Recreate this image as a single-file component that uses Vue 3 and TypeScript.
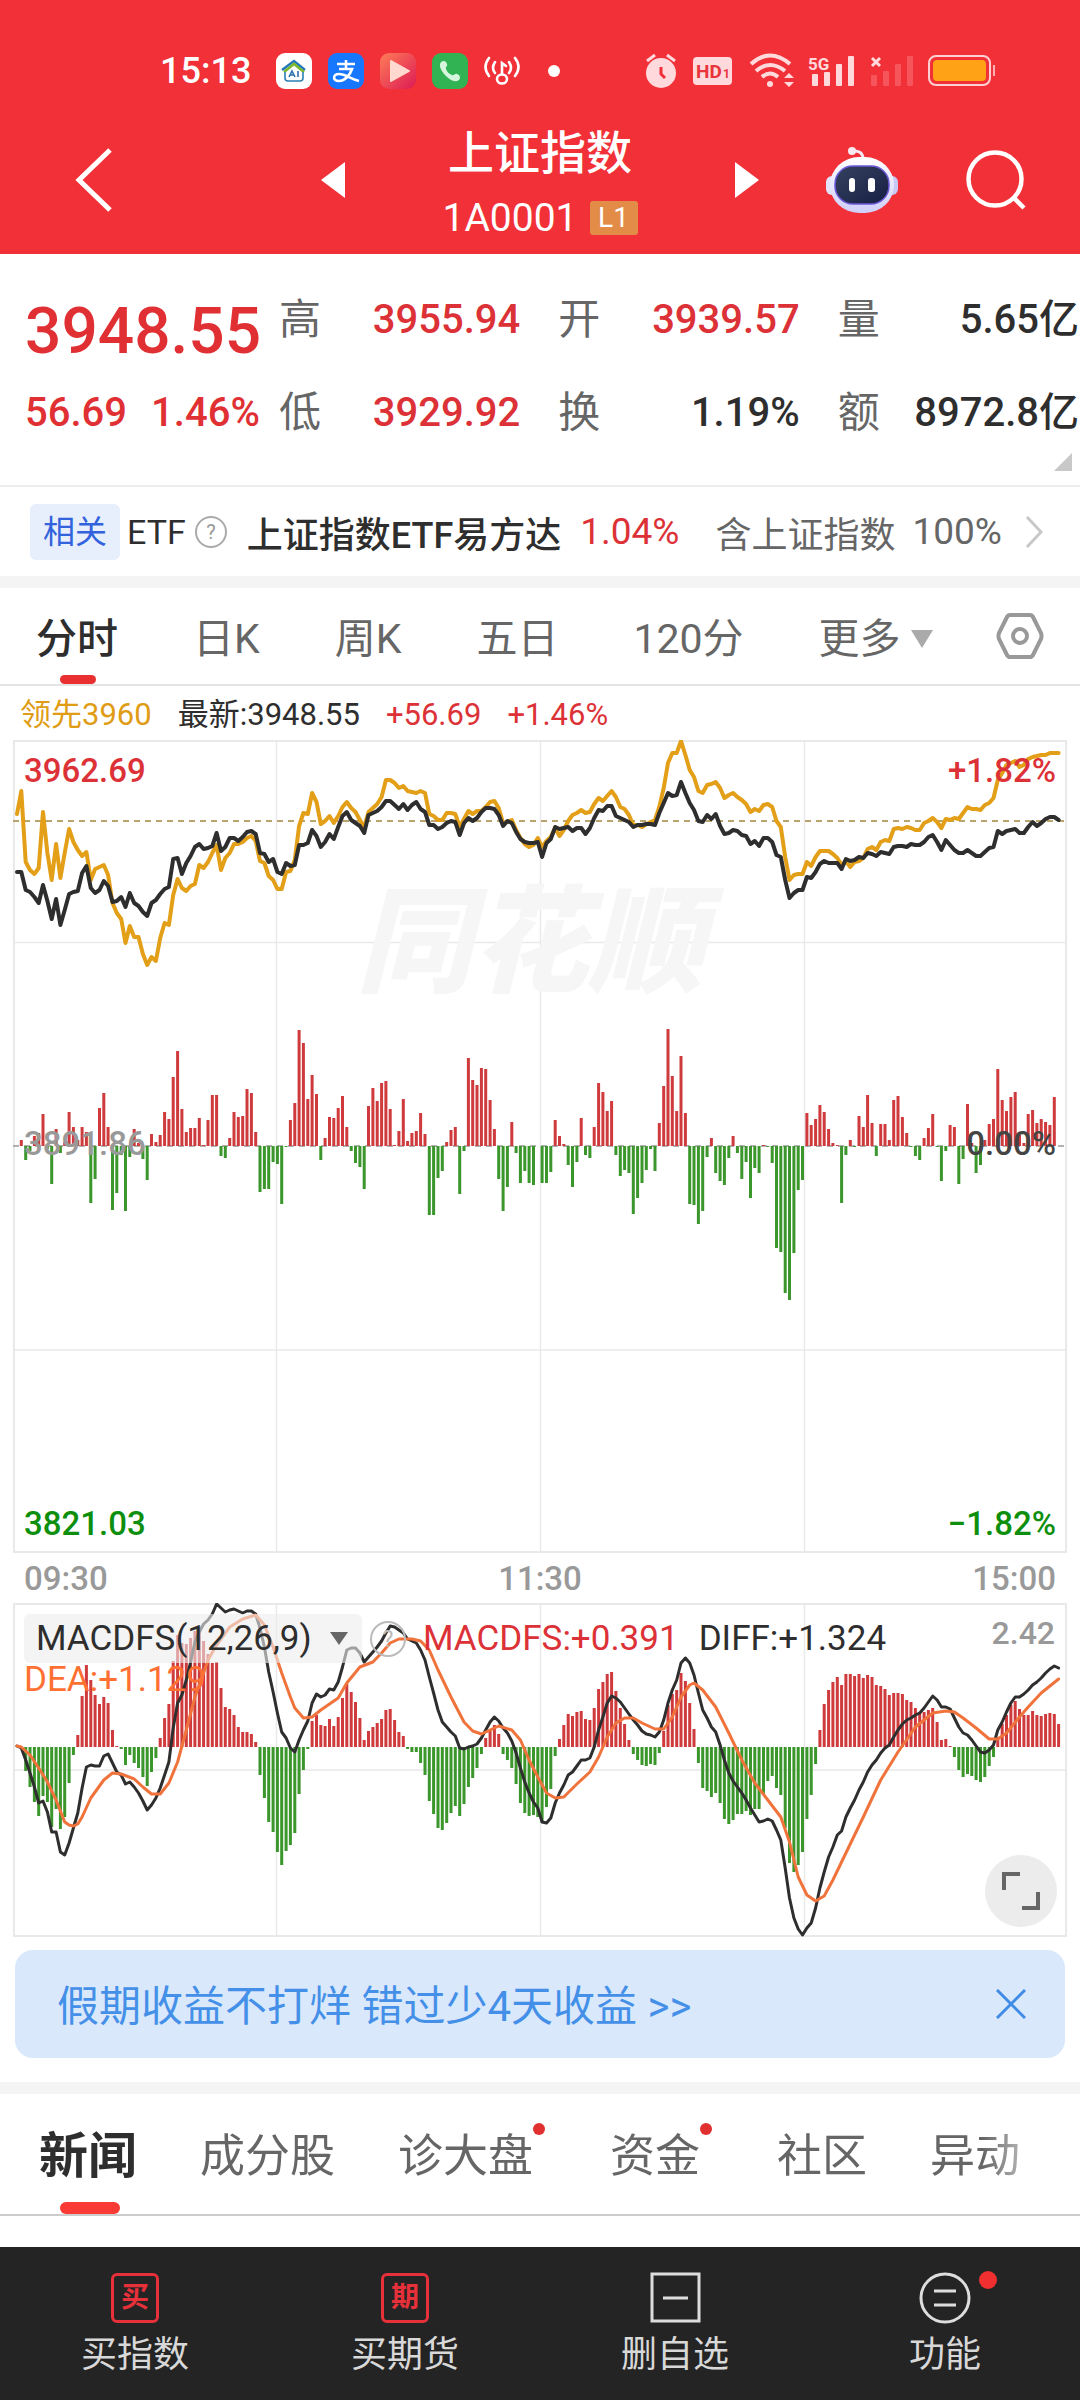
<script setup lang="ts">
interface Quote { label: string; value: string; up: boolean }
interface NewsTab { name: string; dot?: boolean; active?: boolean }

const quoteColumns: Quote[][] = [
  [{ label: '高', value: '3955.94', up: true }, { label: '低', value: '3929.92', up: true }],
  [{ label: '开', value: '3939.57', up: true }, { label: '换', value: '1.19%', up: false }],
  [{ label: '量', value: '5.65亿', up: false }, { label: '额', value: '8972.8亿', up: false }],
]

const periods: string[] = ['分时', '日K', '周K', '五日', '120分']

const newsTabs: NewsTab[] = [
  { name: '新闻', active: true },
  { name: '成分股' },
  { name: '诊大盘', dot: true },
  { name: '资金', dot: true },
  { name: '社区' },
  { name: '异动' },
]

// One sample per trading minute, 09:30 to 15:00
const STEP = 4.34
const px = (i: number): number => Math.round((4 + i * STEP) * 10) / 10

// Index price, measured down from the top of the frame
const price: number[] = [
  132, 132, 150, 152, 157, 163, 145, 161, 179, 159, 185, 170, 154, 152, 151, 133, 126, 148, 153, 150,
  141, 146, 162, 161, 157, 167, 153, 163, 166, 172, 176, 163, 160, 154, 149, 147, 119, 118, 134, 123,
  116, 107, 104, 109, 108, 106, 93, 111, 107, 98, 98, 101, 97, 92, 91, 94, 113, 114, 122, 119,
  132, 134, 123, 126, 125, 105, 105, 103, 90, 96, 107, 102, 94, 99, 87, 76, 72, 80, 83, 86,
  93, 75, 73, 71, 67, 61, 61, 65, 69, 64, 70, 65, 62, 69, 72, 85, 85, 89, 87, 83,
  81, 82, 95, 83, 78, 81, 78, 72, 68, 68, 69, 75, 86, 81, 83, 92, 99, 102, 103, 103,
  102, 117, 103, 99, 87, 89, 88, 87, 91, 88, 88, 94, 88, 78, 70, 71, 66, 66, 76, 78,
  80, 82, 87, 85, 85, 84, 84, 85, 73, 63, 53, 56, 55, 42, 53, 63, 70, 81, 82, 75,
  79, 74, 86, 94, 93, 90, 91, 95, 96, 104, 101, 106, 98, 98, 102, 115, 117, 140, 158, 153,
  150, 150, 137, 138, 132, 124, 121, 123, 123, 123, 129, 119, 121, 120, 117, 118, 113, 114, 116, 112,
  113, 114, 107, 106, 106, 107, 104, 105, 105, 102, 97, 95, 102, 110, 100, 105, 110, 113, 113, 110,
  113, 116, 116, 112, 108, 107, 91, 94, 91, 90, 89, 93, 93, 87, 82, 86, 83, 79, 77, 77, 80,
]

// Leading indicator
const leading: number[] = [
  74, 51, 122, 130, 134, 128, 72, 113, 140, 104, 138, 113, 89, 102, 110, 116, 112, 140, 129, 127,
  125, 135, 163, 173, 179, 203, 186, 197, 197, 214, 225, 217, 221, 198, 183, 185, 155, 139, 148, 151,
  146, 144, 125, 128, 122, 113, 105, 130, 118, 113, 104, 104, 102, 98, 96, 101, 121, 123, 136, 140,
  149, 149, 132, 131, 120, 86, 73, 74, 53, 62, 84, 81, 76, 83, 76, 67, 62, 68, 72, 80,
  87, 72, 68, 64, 57, 40, 40, 43, 48, 46, 51, 52, 53, 51, 53, 74, 76, 80, 80, 73,
  73, 74, 87, 79, 71, 74, 71, 71, 67, 62, 61, 68, 83, 82, 80, 90, 98, 104, 107, 105,
  98, 107, 101, 97, 88, 96, 90, 81, 75, 73, 70, 73, 72, 64, 58, 61, 56, 51, 57, 67,
  69, 75, 85, 85, 87, 84, 82, 80, 67, 48, 23, 13, 13, 1, 15, 30, 37, 51, 53, 45,
  44, 42, 48, 58, 55, 53, 57, 60, 64, 72, 69, 71, 65, 64, 67, 81, 87, 117, 140, 135,
  134, 134, 122, 126, 117, 111, 111, 111, 114, 118, 125, 121, 127, 122, 121, 118, 109, 107, 110, 102,
  100, 101, 89, 88, 89, 87, 88, 90, 90, 83, 81, 78, 82, 88, 79, 80, 78, 79, 73, 67,
  69, 69, 70, 65, 63, 58, 40, 33, 25, 23, 21, 27, 25, 19, 17, 16, 15, 15, 13, 13, 13,
]

// Buying (positive) and selling (negative) pressure
const pressure: number[] = [
  0, 6, -14, -5, 10, 13, 32, -3, -38, 17, -7, 4, 34, 19, 6, 19, 14, -57, -33, 38,
  53, 19, -64, -47, -9, -65, -11, 17, 3, -13, -34, 12, 4, 11, 34, 27, 69, 95, 37, 14,
  18, 18, 28, 1, 26, 51, 51, -10, -12, 8, 34, 29, 30, 57, 53, 14, -46, -43, -43, -16,
  -18, -58, -1, 26, 43, 116, 103, 47, 71, 52, -14, 8, 29, 28, 38, 50, 19, -5, -17, -21,
  -43, 40, 58, 45, 63, 65, 37, 1, 15, 47, 5, 13, 15, 33, 12, -69, -69, -32, -25, 4,
  16, 19, -48, -5, 88, 66, 61, 78, 77, 46, 17, -33, -65, -41, 24, -7, -37, -25, -37, -39,
  0, -37, -37, -26, 26, 10, 2, -19, -41, -16, 28, -9, -12, 19, 63, 54, 35, 45, -9, -30,
  -24, -27, -68, -52, -37, -24, -3, -25, 23, 60, 117, 70, 35, 90, 33, -58, -59, -78, -65, -11,
  8, -27, -35, -39, -12, 10, -7, -33, -16, -52, -22, -27, 1, -1, -17, -102, -106, -147, -154, -107,
  -44, -34, 33, 21, 27, 41, 34, 17, 3, 1, -57, -9, 6, -1, 30, 19, 51, 23, -10, 22,
  22, 6, 46, 50, 29, 13, -1, -10, -14, 8, 18, 32, -1, -35, -5, 21, 19, -38, -13, 42,
  3, -27, -19, 6, 22, 27, 77, 46, 35, 49, 54, 11, 3, 32, 36, 23, 27, 24, 21, 49, 0,
]

const macd: number[] = [
  0, -2, -24, -40, -55, -69, -49, -55, -80, -62, -82, -70, -36, -8, 12, 51, 82, 67, 52, 43,
  50, 44, 17, 1, -2, -18, -8, -16, -21, -30, -39, -25, -11, 9, 29, 43, 86, 112, 104, 103,
  109, 116, 120, 106, 93, 84, 85, 59, 40, 38, 32, 20, 15, 15, 13, 5, -28, -51, -75, -85,
  -105, -118, -104, -98, -86, -47, -23, -2, 26, 32, 22, 21, 28, 21, 30, 49, 63, 55, 45, 29,
  7, 16, 20, 24, 28, 37, 38, 27, 15, 11, -2, -5, -5, -16, -28, -54, -67, -81, -83, -76,
  -66, -59, -69, -57, -40, -31, -21, -7, 9, 17, 22, 13, -7, -13, -21, -37, -56, -66, -69, -68,
  -70, -76, -60, -42, -9, 8, 22, 33, 31, 35, 36, 28, 27, 39, 58, 65, 73, 75, 56, 39,
  23, 7, -7, -13, -18, -19, -17, -18, -6, 16, 42, 53, 57, 74, 66, 44, 18, -16, -41, -44,
  -50, -46, -56, -72, -77, -73, -67, -67, -64, -68, -62, -62, -48, -34, -29, -41, -48, -81, -116, -125,
  -118, -105, -72, -48, -17, 17, 43, 57, 65, 70, 62, 73, 73, 71, 73, 69, 72, 70, 62, 61,
  58, 52, 54, 54, 53, 47, 45, 39, 35, 35, 37, 39, 25, 7, 8, 1, -10, -23, -30, -27,
  -29, -33, -35, -30, -19, -10, 10, 23, 32, 42, 46, 38, 32, 32, 36, 32, 31, 33, 34, 33, 23,
]

const diff: number[] = [
  143, 145, 157, 170, 184, 200, 198, 209, 229, 229, 249, 252, 240, 225, 210, 185, 164, 162, 163, 163,
  153, 151, 160, 169, 172, 181, 179, 184, 190, 198, 207, 202, 195, 185, 172, 159, 125, 100, 92, 77,
  59, 39, 29, 21, 17, 11, 1, 5, 9, 7, 6, 8, 10, 8, 8, 11, 25, 44, 69, 89,
  110, 129, 135, 145, 149, 137, 127, 118, 100, 91, 94, 92, 86, 87, 79, 64, 47, 45, 45, 50,
  59, 54, 49, 44, 38, 30, 23, 24, 27, 30, 36, 38, 40, 47, 57, 74, 90, 107, 119, 124,
  129, 133, 145, 146, 144, 143, 141, 135, 127, 119, 114, 118, 125, 130, 138, 150, 165, 179, 190, 199,
  205, 219, 220, 215, 200, 190, 182, 172, 169, 163, 157, 157, 155, 144, 127, 114, 100, 93, 95, 99,
  105, 111, 117, 122, 128, 131, 132, 134, 129, 117, 100, 87, 77, 60, 55, 60, 72, 90, 107, 115,
  124, 129, 142, 157, 170, 178, 184, 190, 197, 205, 212, 219, 218, 216, 218, 227, 237, 265, 295, 315,
  326, 332, 325, 320, 305, 285, 269, 254, 244, 232, 228, 214, 205, 197, 187, 179, 169, 162, 157, 150,
  145, 142, 134, 127, 121, 117, 115, 112, 110, 105, 99, 93, 97, 104, 104, 106, 115, 124, 130, 132,
  137, 143, 149, 150, 147, 142, 127, 119, 109, 100, 94, 94, 91, 87, 82, 79, 75, 70, 66, 63, 65,
]

// DEA is already smoothed, so only its knots are kept: [minute, y]
const dea: [number, number][] = [
  [0, 143], [1, 144], [3, 152], [5, 165], [7, 179], [9, 197], [11, 219], [12, 222], [13, 223], [14, 221],
  [15, 214], [17, 195], [20, 177], [22, 170], [24, 171], [27, 176], [29, 184], [31, 191], [33, 191], [35, 180],
  [37, 159], [39, 127], [41, 94], [43, 70], [44, 57], [46, 42], [49, 24], [52, 16], [55, 12], [57, 22],
  [59, 44], [61, 70], [63, 94], [64, 105], [66, 115], [68, 114], [70, 107], [74, 95], [76, 80], [79, 64],
  [82, 59], [84, 50], [86, 40], [88, 36], [91, 36], [93, 38], [95, 47], [97, 67], [100, 94], [103, 119],
  [105, 128], [107, 131], [109, 127], [111, 123], [114, 127], [116, 137], [118, 157], [120, 174], [122, 190],
  [124, 195], [126, 194], [129, 181], [132, 169], [134, 154], [136, 134], [138, 120], [140, 115], [142, 115],
  [144, 120], [147, 126], [149, 126], [151, 114], [153, 94], [155, 82], [156, 80], [158, 87], [161, 104],
  [164, 130], [167, 157], [170, 180], [173, 197], [176, 214], [178, 239], [180, 274], [182, 292], [184, 298],
  [186, 293], [188, 277], [191, 250], [195, 214], [199, 177], [203, 149], [207, 124], [211, 110], [214, 108],
  [216, 109], [218, 115], [221, 125], [224, 136], [226, 136], [228, 130], [231, 114], [233, 104], [236, 90],
  [238, 83], [240, 76],
]

const polyline = (ys: number[]): string => ys.map((y, i) => `${px(i)},${y}`).join(' ')
const bars = (values: number[], base: number, up: boolean): string =>
  values
    .map((v, i) => ((up ? v > 0 : v < 0) ? `M${px(i)} ${base}V${base - v}` : ''))
    .join('')

const pricePoints = polyline(price)
const leadingPoints = polyline(leading)
const diffPoints = polyline(diff)
const deaPoints = dea.map(([i, y]) => `${px(i)},${y}`).join(' ')
</script>

<template>
  <div class="app">
    <header class="top">
      <div class="status">
        <div class="status-left">
          <span class="clock">15:13</span>
          <svg width="36" height="36" viewBox="0 0 36 36" aria-hidden="true">
            <rect width="36" height="36" rx="9" fill="#fff" />
            <path d="M6 17 18 8l11 9" fill="none" stroke="#2376b9" stroke-width="2.4" />
            <path d="M8 19 18 11l10 8" fill="none" stroke="#7cb82f" stroke-width="2.6" />
            <path d="M9 19v6q0 3 3 3h12q3 0 3-3v-6" fill="none" stroke="#2b7fb4" stroke-width="1.6" />
            <path d="m13 24 3-6 3 6m-5-2h4m4-4v6" fill="none" stroke="#2d6fae" stroke-width="1.6" />
          </svg>
          <svg width="36" height="36" viewBox="0 0 36 36" aria-hidden="true">
            <rect width="36" height="36" rx="9" fill="#1777ff" />
            <path d="M18 7v9M9 11h18M11 16h13c-2 6-7 12-13 12-7 0-6-7 0-7 7 0 11 5 20 7" fill="none" stroke="#fff" stroke-width="2.6" />
          </svg>
          <svg width="36" height="36" viewBox="0 0 36 36" aria-hidden="true">
            <defs>
              <linearGradient id="video" x1="0" y1="0" x2="1" y2="1">
                <stop offset="0" stop-color="#ff7d57" />
                <stop offset="1" stop-color="#dc1a55" />
              </linearGradient>
            </defs>
            <rect width="36" height="36" rx="9" fill="url(#video)" />
            <path d="M11 8v20l18-10z" fill="#ffd9cf" stroke="#ffd9cf" stroke-width="2" stroke-linejoin="round" />
          </svg>
          <svg width="36" height="36" viewBox="0 0 36 36" aria-hidden="true">
            <rect width="36" height="36" rx="9" fill="#31b353" />
            <path d="M9 9c3-2 5-1 6 2 1 2-2 3-1 5 1 3 3 5 6 6 2 1 3-2 5-1 3 1 4 4 2 6-4 3-9 0-13-4C10 19 6 13 9 9z" fill="#d5f5dc" />
          </svg>
          <svg width="36" height="36" viewBox="0 0 36 36" fill="none" stroke="#fff" stroke-width="2.6" stroke-linecap="round" aria-hidden="true">
            <path d="M18 21V10l4 3" />
            <ellipse cx="18" cy="26" rx="5" ry="4.5" />
            <path d="M11 9q-4 6 0 11M25 9q4 6 0 11M5 5q-7 9 0 18M31 5q7 9 0 18" />
          </svg>
          <i class="more-dot"></i>
        </div>
        <div class="status-right">
          <svg width="32" height="36" viewBox="0 0 32 36" aria-hidden="true">
            <circle cx="16" cy="20" r="15" fill="#ffd9dc" />
            <path d="M2 8l8-6M30 8l-8-6" stroke="#ffd9dc" stroke-width="3" />
            <path d="M16 14v7l4 4" fill="none" stroke="#f03038" stroke-width="3" />
          </svg>
          <svg width="44" height="36" viewBox="0 0 44 36" aria-hidden="true">
            <rect x="2" y="4" width="39" height="28" rx="4" fill="#ffd9dc" />
            <text x="5" y="25" font-size="19" font-weight="700" fill="#e8343c">HD</text>
            <text x="32" y="25" font-size="12" font-weight="700" fill="#e8343c">1</text>
          </svg>
          <svg width="45" height="36" viewBox="0 0 45 36" fill="none" stroke="#ffd9dc" stroke-width="4" aria-hidden="true">
            <path d="M2 11q19-17 39 0M7 18q14-12 29 0M13 24q8-7 16 0" />
            <circle cx="21" cy="31" r="3" fill="#ffd9dc" stroke="none" />
            <path d="M35 25l5-5 5 5zM35 29l5 5 5-5z" fill="#ffd9dc" stroke="none" />
          </svg>
          <svg width="48" height="36" viewBox="0 0 48 36" fill="#ffd9dc" aria-hidden="true">
            <text x="0" y="17" font-size="17" font-weight="700">5G</text>
            <rect x="4" y="21" width="6" height="12" rx="1" />
            <rect x="16" y="19" width="6" height="14" rx="1" />
            <rect x="28" y="11" width="6" height="22" rx="1" />
            <rect x="40" y="3" width="6" height="30" rx="1" />
          </svg>
          <svg width="44" height="36" viewBox="0 0 44 36" fill="#f7555c" aria-hidden="true">
            <path d="M2 5l8 8M10 5l-8 8" stroke="#ffd9dc" stroke-width="3" />
            <rect x="1" y="22" width="6" height="11" rx="1" />
            <rect x="13" y="18" width="6" height="15" rx="1" />
            <rect x="25" y="11" width="6" height="22" rx="1" />
            <rect x="37" y="3" width="6" height="30" rx="1" />
          </svg>
          <svg width="68" height="36" viewBox="0 0 68 36" aria-hidden="true">
            <rect x="1" y="3" width="61" height="29" rx="7" fill="none" stroke="#ffd0d3" stroke-width="2" />
            <rect x="5" y="7" width="53" height="21" rx="4" fill="#ffa216" />
            <rect x="65" y="12" width="2" height="11" fill="#ffb0b4" />
          </svg>
        </div>
      </div>

      <div class="titlebar">
        <button class="icon-btn back" type="button" aria-label="返回">
          <svg width="38" height="66" viewBox="0 0 38 66"><path d="M35 3 4 33l31 30" fill="none" stroke="#fff" stroke-width="5" /></svg>
        </button>
        <div class="switcher">
          <button class="icon-btn" type="button" aria-label="上一个">
            <svg width="24" height="36" viewBox="0 0 24 36"><path d="M24 0v36L0 18z" fill="#fff" /></svg>
          </button>
          <div class="title">
            <h1>上证指数</h1>
            <p>1A0001<span class="level">L1</span></p>
          </div>
          <button class="icon-btn" type="button" aria-label="下一个">
            <svg width="24" height="36" viewBox="0 0 24 36"><path d="M0 0v36l24-18z" fill="#fff" /></svg>
          </button>
        </div>
        <div class="actions">
          <button class="icon-btn" type="button" aria-label="智能助手">
            <svg width="72" height="68" viewBox="0 0 72 68">
              <defs>
                <linearGradient id="shell" x1="0" y1="0" x2="0" y2="1">
                  <stop offset="0" stop-color="#fff" />
                  <stop offset="1" stop-color="#cfcffa" />
                </linearGradient>
                <linearGradient id="visor" x1="0" y1="0" x2="1" y2="1">
                  <stop offset="0" stop-color="#35405f" />
                  <stop offset="1" stop-color="#172044" />
                </linearGradient>
              </defs>
              <path d="M26 5q11-1 11 8" fill="none" stroke="#f3e7f2" stroke-width="3" />
              <circle cx="26" cy="5" r="4" fill="#f7e9f0" />
              <rect x="0" y="30" width="12" height="19" rx="6" fill="#e3e2fb" />
              <rect x="60" y="30" width="12" height="19" rx="6" fill="#c9c9f8" />
              <rect x="4" y="11" width="64" height="56" rx="29" fill="url(#shell)" />
              <rect x="9" y="20" width="54" height="38" rx="18" fill="url(#visor)" stroke="#6b58d8" stroke-width="1.5" />
              <rect x="23" y="32" width="6" height="14" rx="3" fill="#fff" />
              <rect x="42" y="32" width="7" height="14" rx="3" fill="#fff" />
            </svg>
          </button>
          <button class="icon-btn" type="button" aria-label="搜索">
            <svg width="60" height="60" viewBox="0 0 60 60" fill="none" stroke="#fff" stroke-width="4.500">
              <circle cx="29" cy="29" r="26.500" /><path d="m47 47 11 11" />
            </svg>
          </button>
        </div>
      </div>
    </header>

    <section class="quote">
      <div class="latest">
        <strong>3948.55</strong>
        <p><span>56.69</span><span>1.46%</span></p>
      </div>
      <div class="stats">
        <dl v-for="(column, c) in quoteColumns" :key="c">
          <div v-for="item in column" :key="item.label">
            <dt>{{ item.label }}</dt>
            <dd :class="{ up: item.up }">{{ item.value }}</dd>
          </div>
        </dl>
      </div>
      <i class="corner"></i>
    </section>

    <a class="etf" href="#etf">
      <span class="related">相关</span>
      <span class="etf-word">ETF</span>
      <svg class="help" width="32" height="32" viewBox="0 0 32 32">
        <circle cx="16" cy="16" r="15" fill="none" stroke="#aaa" stroke-width="2" />
        <text x="16" y="23" text-anchor="middle" font-size="20" fill="#999">?</text>
      </svg>
      <b>上证指数ETF易方达</b>
      <span class="up rate">1.04%</span>
      <span class="weight">含上证指数</span>
      <span class="gray">100%</span>
      <svg class="arrow" width="18" height="32" viewBox="0 0 18 32"><path d="m2 1 14 15L2 31" fill="none" stroke="#c8c8c8" stroke-width="3" /></svg>
    </a>

    <nav class="periods">
      <div class="period-tabs">
        <button v-for="(p, i) in periods" :key="p" type="button" :class="{ active: i === 0 }">{{ p }}</button>
        <button type="button" class="more">更多<svg width="22" height="18" viewBox="0 0 22 18"><path d="M0 0h22L11 18z" fill="#aaa" /></svg></button>
      </div>
      <button type="button" aria-label="设置">
        <svg width="48" height="46" viewBox="0 0 48 46" fill="none" stroke="#999" stroke-width="4">
          <path d="M14 2h20q2 0 3 2l8 16q1 3 0 6l-8 16q-1 2-3 2H14q-2 0-3-2L3 26q-1-3 0-6l8-16q1-2 3-2z" />
          <circle cx="24" cy="23" r="7" />
        </svg>
      </button>
    </nav>

    <p class="legend">
      <span class="lead">领先3960</span><span>最新:3948.55</span><span class="up">+56.69</span><span class="up">+1.46%</span>
    </p>

    <div class="chart">
      <svg viewBox="0 0 1054 813">
        <g fill="none" stroke="#e9e9e9" stroke-width="2">
          <path d="M1 1h1052v811H1z" />
          <path d="M263.500 0v813M527.500 0v813M791.500 0v813M0 202.500h1054M0 610h1054" stroke-width="1.500" />
        </g>
        <text x="343" y="243" class="watermark">同花顺</text>
        <path d="M0 81h1054" stroke="#b8a46c" stroke-width="2" stroke-dasharray="6 5" />
        <path d="M0 406h1054" stroke="#999" stroke-width="1.500" stroke-dasharray="6 5" />
        <path :d="bars(pressure, 406, true)" stroke="#cf3b3d" stroke-width="3" />
        <path :d="bars(pressure, 406, false)" stroke="#3b962c" stroke-width="3" />
        <polyline :points="leadingPoints" class="line" stroke="#e29f17" />
        <polyline :points="pricePoints" class="line" stroke="#2e2e2e" />
      </svg>
      <div class="axis">
        <p class="up"><span>3962.69</span><span>+1.82%</span></p>
        <p class="mid"><span>3891.86</span><span class="zero">0.00%</span></p>
        <p class="down"><span>3821.03</span><span>−1.82%</span></p>
      </div>
    </div>
    <p class="times"><span>09:30</span><span>11:30</span><span>15:00</span></p>

    <div class="chart">
      <svg viewBox="0 0 1054 334">
        <g fill="none" stroke="#e9e9e9" stroke-width="2">
          <path d="M1 1h1052v332H1z" />
          <path d="M263.500 0v334M527.500 0v334M791.500 0v334M0 167h1054" stroke-width="1.500" />
        </g>
        <path :d="bars(macd, 144, true)" stroke="#cf3b3d" stroke-width="3" />
        <path :d="bars(macd, 144, false)" stroke="#3b962c" stroke-width="3" />
        <polyline :points="diffPoints" class="line thin" stroke="#2e2e2e" />
        <polyline :points="deaPoints" class="line thin" stroke="#f0733c" />
      </svg>
      <div class="macd-legend">
        <button type="button" class="indicator">MACDFS(12,26,9)<svg width="18" height="13" viewBox="0 0 18 13"><path d="M0 0h18L9 13z" fill="#666" /></svg></button>
        <svg class="help" width="38" height="38" viewBox="0 0 38 38">
          <circle cx="19" cy="19" r="17" fill="none" stroke="#bbb" stroke-width="2" />
          <text x="19" y="27" text-anchor="middle" font-size="23" fill="#bbb">?</text>
        </svg>
        <span class="up macd-value">MACDFS:+0.391</span>
        <span>DIFF:+1.324</span>
        <span class="dea">DEA:+1.129</span>
      </div>
      <span class="scale">2.42</span>
      <button type="button" class="expand" aria-label="全屏">
        <svg width="38" height="38" viewBox="0 0 38 38" fill="none" stroke="#666" stroke-width="4">
          <path d="M2 18V2h16M36 20v16H20" />
        </svg>
      </button>
    </div>

    <aside class="promo">
      <a href="#promo">假期收益不打烊 错过少4天收益 &gt;&gt;</a>
      <button type="button" class="icon-btn" aria-label="关闭">
        <svg width="30" height="30" viewBox="0 0 30 30"><path d="m1 1 28 28M29 1 1 29" stroke="#3f8be6" stroke-width="3" /></svg>
      </button>
    </aside>

    <nav class="news">
      <div class="news-tabs">
        <button v-for="t in newsTabs" :key="t.name" type="button" :class="{ active: t.active, dotted: t.dot }">{{ t.name }}</button>
      </div>
    </nav>

    <footer class="bottom">
      <button type="button"><span class="box">买</span>买指数</button>
      <button type="button"><span class="box">期</span>买期货</button>
      <button type="button">
        <svg width="52" height="52" viewBox="0 0 52 52" fill="none" stroke="#ddd" stroke-width="3"><path d="M3 2h47v47H3zM14 26h25" /></svg>删自选
      </button>
      <button type="button">
        <span class="func">
          <svg width="52" height="52" viewBox="0 0 52 52" fill="none" stroke="#ddd" stroke-width="3"><circle cx="26" cy="26" r="24" /><path d="M15 19h22M15 33h22" /></svg>
        </span>功能
      </button>
    </footer>
  </div>
</template>

<style>
body {
  margin: 0;
  background: #fff;
}
</style>

<style scoped>
.app {
  font-family: Roboto, "Noto Sans CJK SC", sans-serif;
  color: #2e2e2e;
  overflow: hidden;
}
p, h1, dl, dd {
  margin: 0;
}
button {
  padding: 0;
  border: 0;
  background: none;
  color: inherit;
  font: inherit;
}
svg {
  display: block;
  flex: none;
}
a {
  color: inherit;
  text-decoration: none;
}
.up {
  color: #dc3237;
}

.top {
  background: #f23038;
  color: #fff;
}
.status {
  display: flex;
  justify-content: space-between;
  height: 70px;
  padding: 36px 84px 0 160px;
}
.status-left, .status-right {
  display: flex;
  align-items: center;
}
.status-left {
  gap: 16px;
}
.status-right {
  gap: 14px;
}
.clock {
  width: 100px;
  font-size: 36px;
  font-weight: 500;
}
.more-dot {
  width: 12px;
  height: 12px;
  margin-left: 12px;
  border-radius: 50%;
  background: #fff;
}
.titlebar {
  display: grid;
  grid-template-columns: 1fr 438px 1fr;
  align-items: center;
  height: 148px;
}
.back {
  justify-self: start;
  margin-left: 75px;
}
.switcher {
  display: flex;
  align-items: center;
  justify-content: space-between;
}
.title {
  padding-top: 4px;
  text-align: center;
}
.title h1 {
  font-size: 46px;
  font-weight: 500;
  line-height: 58px;
}
.title p {
  display: flex;
  align-items: center;
  gap: 12px;
  margin-top: 14px;
  font-size: 39px;
  line-height: 44px;
}
.level {
  width: 48px;
  border-radius: 3px;
  background: #e28c48;
  font-size: 28px;
  line-height: 34px;
}
.actions {
  display: flex;
  align-items: center;
  justify-content: flex-end;
  gap: 68px;
  padding-right: 54px;
}

.quote {
  position: relative;
  display: flex;
  padding: 19px 1px 26px 25px;
  border-bottom: 2px solid #ececec;
}
.latest {
  flex: none;
  width: 254px;
  color: #e03034;
}
.latest strong {
  display: block;
  padding-top: 24px;
  font-size: 64px;
  font-weight: 500;
  line-height: 69px;
}
.latest p {
  display: flex;
  gap: 24px;
  font-size: 40px;
  font-weight: 500;
  line-height: 93px;
}
.stats {
  display: grid;
  flex: 1;
  grid-template-columns: repeat(3, 1fr);
  column-gap: 38px;
  font-size: 40px;
  line-height: 93px;
}
.stats dl > div {
  display: flex;
  justify-content: space-between;
  white-space: nowrap;
}
.stats dt {
  color: #666;
  font-size: 42px;
}
.stats dd {
  font-weight: 500;
}
.corner {
  position: absolute;
  right: 8px;
  bottom: 14px;
  border-bottom: 18px solid #c8c8c8;
  border-left: 18px solid transparent;
}

.etf {
  display: flex;
  align-items: center;
  height: 89px;
  padding: 0 37px 0 30px;
  border-bottom: 12px solid #f4f4f4;
  font-size: 36px;
  white-space: nowrap;
}
.related {
  width: 90px;
  border-radius: 6px;
  background: #e7eefc;
  color: #3262dc;
  font-size: 32px;
  line-height: 56px;
  text-align: center;
}
.etf-word {
  margin-left: 7px;
  font-size: 34px;
}
.etf .help {
  margin: 0 20px 0 9px;
}
.etf b {
  font-weight: 500;
}
.rate {
  margin-left: 19px;
  font-size: 37px;
}
.weight {
  margin: 0 17px 0 36px;
  color: #666;
}
.gray {
  color: #666;
  font-size: 37px;
}
.arrow {
  margin-left: auto;
}

.periods {
  display: flex;
  align-items: center;
  justify-content: space-between;
  height: 96px;
  padding: 0 36px;
  border-bottom: 2px solid #e4e4e4;
  color: #666;
}
.period-tabs {
  display: flex;
  gap: 75px;
  font-size: 41px;
  line-height: 90px;
  white-space: nowrap;
}
.period-tabs button {
  flex: none;
  padding-top: 6px;
}
.periods .active {
  position: relative;
  color: #2e2e2e;
  font-weight: 500;
}
.periods .active::after {
  position: absolute;
  bottom: 0;
  left: 24px;
  width: 36px;
  height: 9px;
  border-radius: 5px;
  background: #e93030;
  content: "";
}
.more {
  display: flex;
  align-items: center;
  gap: 10px;
}

.legend {
  display: flex;
  gap: 26px;
  padding: 3px 20px 0;
  font-size: 31px;
  line-height: 51px;
}
.lead {
  color: #e09c14;
}

.chart {
  position: relative;
  margin: 0 13px;
}
.chart > svg {
  width: 100%;
  height: auto;
}
.line {
  fill: none;
  stroke-width: 4;
  stroke-linejoin: round;
  stroke-linecap: round;
}
.thin {
  stroke-width: 3;
}
.watermark {
  fill: #f6f6f6;
  font-size: 116px;
  font-style: italic;
  font-weight: 900;
}
.axis {
  position: absolute;
  inset: 0;
  display: flex;
  flex-direction: column;
  justify-content: space-between;
  padding: 14px 11px 12px;
  font-size: 33px;
  font-weight: 500;
  line-height: 34px;
}
.axis p {
  display: flex;
  justify-content: space-between;
}
.axis .mid {
  padding-bottom: 8px;
  color: #999;
}
.mid .zero {
  color: #444;
}
.down {
  color: #0d8f0d;
}
.times {
  display: flex;
  justify-content: space-between;
  padding: 2px 24px 0;
  color: #999;
  font-size: 33px;
  font-weight: 500;
  line-height: 48px;
}

.macd-legend {
  position: absolute;
  top: 11px;
  left: 11px;
  display: flex;
  flex-wrap: wrap;
  align-items: center;
  width: 900px;
  font-size: 35px;
  line-height: 40px;
}
.indicator {
  display: flex;
  align-items: center;
  justify-content: space-between;
  width: 338px;
  height: 49px;
  padding: 0 14px 0 12px;
  border-radius: 6px;
  background: rgba(236, 236, 236, 0.6);
}
.macd-legend .help {
  margin: 0 16px 0 7px;
}
.macd-value {
  margin-right: 20px;
}
.dea {
  width: 100%;
  color: #ff7033;
  line-height: 34px;
}
.scale {
  position: absolute;
  top: 10px;
  right: 12px;
  color: #999;
  font-size: 32px;
  font-weight: 500;
  line-height: 40px;
}
.expand {
  position: absolute;
  right: 10px;
  bottom: 10px;
  display: flex;
  align-items: center;
  justify-content: center;
  width: 72px;
  height: 72px;
  border-radius: 50%;
  background: #ececec;
}

.promo {
  display: flex;
  align-items: center;
  justify-content: space-between;
  height: 108px;
  margin: 13px 15px 24px;
  padding: 0 39px 0 42px;
  border-radius: 18px;
  background: #dae8fb;
  color: #4490e8;
  font-size: 42px;
}
.promo a {
  padding-bottom: 4px;
}

.news {
  border-top: 12px solid #f4f4f4;
  border-bottom: 2px solid #ccc;
}
.news-tabs {
  display: flex;
  gap: 63px;
  height: 120px;
  padding-left: 39px;
  color: #666;
  font-size: 45px;
  line-height: 115px;
  white-space: nowrap;
  mask-image: linear-gradient(to right, #000 91%, transparent 98%);
}
.news-tabs button {
  position: relative;
  flex: none;
  padding-top: 5px;
}
.news-tabs .active {
  color: #2e2e2e;
  font-size: 49px;
  font-weight: 700;
}
.news-tabs .active::after {
  position: absolute;
  bottom: 0;
  left: 21px;
  width: 60px;
  height: 12px;
  border-radius: 6px;
  background: #fa3a34;
  content: "";
}
.news-tabs .dotted {
  padding-right: 14px;
}
.dotted::after {
  position: absolute;
  top: 29px;
  right: 2px;
  width: 12px;
  height: 12px;
  border-radius: 50%;
  background: #e03030;
  content: "";
}

.bottom {
  display: grid;
  grid-template-columns: repeat(4, 1fr);
  margin-top: 31px;
  padding: 25px 0 22px;
  background: #242424;
  color: #d8d8d8;
  font-size: 36px;
  line-height: 46px;
}
.bottom button {
  display: flex;
  flex-direction: column;
  align-items: center;
  gap: 8px;
}
.box {
  box-sizing: border-box;
  width: 48px;
  height: 50px;
  margin: 1px 0;
  border: 3px solid #e6303a;
  border-radius: 6px;
  color: #e6303a;
  font-size: 28px;
  font-weight: 700;
  line-height: 44px;
  text-align: center;
}
.func {
  position: relative;
}
.func::after {
  position: absolute;
  top: -1px;
  right: -26px;
  width: 18px;
  height: 18px;
  border-radius: 50%;
  background: #f03030;
  content: "";
}
</style>
